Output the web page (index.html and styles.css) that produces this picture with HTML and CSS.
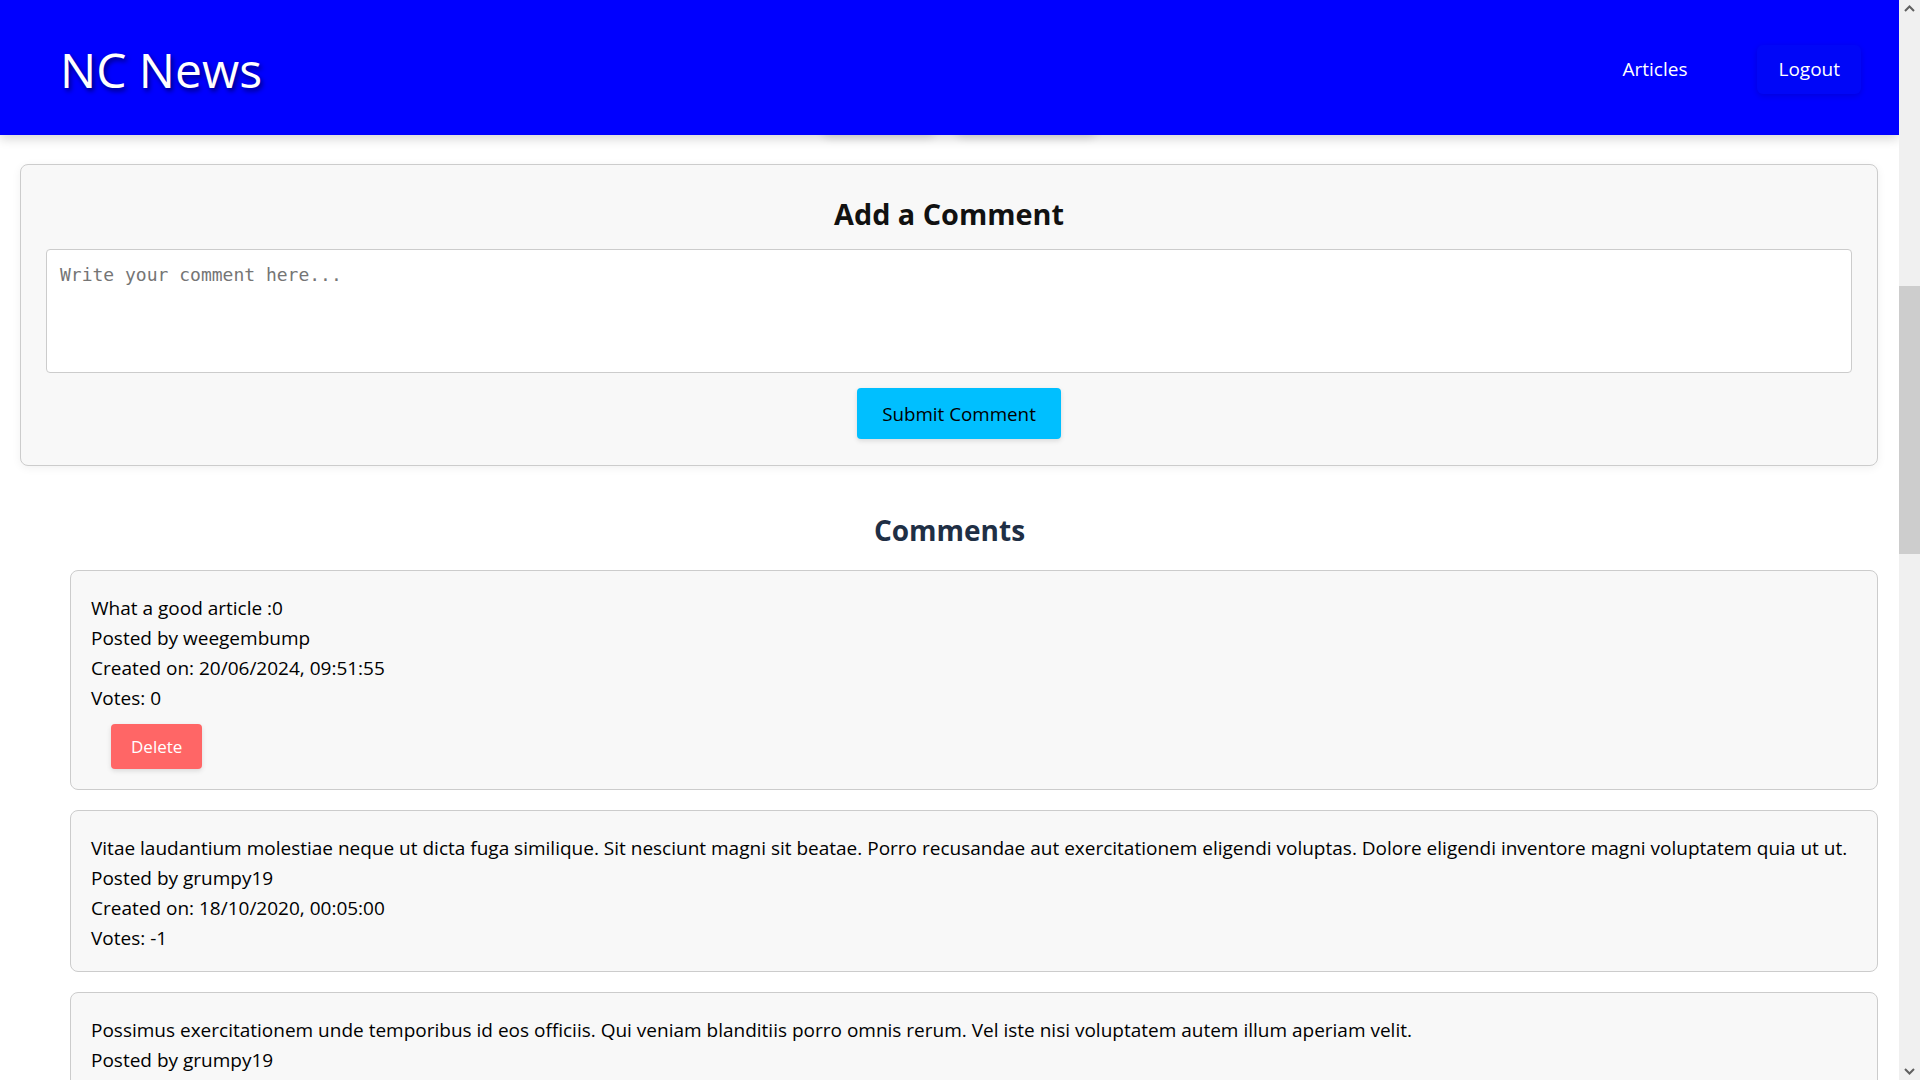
FILE: index.html
```html
<!DOCTYPE html>
<html lang="en">
<head>
<meta charset="utf-8">
<title>NC News</title>
<link rel="stylesheet" href="styles.css">
</head>
<body>
<div class="app">
  <div class="page">
    <header class="topbar">
      <h1 class="logo">NC News</h1>
      <nav class="nav">
        <a class="nav-link" href="#">Articles</a>
        <a class="nav-link nav-link--raised" href="#">Logout</a>
      </nav>
    </header>

    <div class="vote-row">
      <button class="vote-btn vote-btn--up" type="button">Upvote</button>
      <button class="vote-btn vote-btn--down" type="button">Downvote</button>
    </div>

    <section class="comment-form">
      <h2 class="comment-form__title">Add a Comment</h2>
      <textarea class="comment-form__input" placeholder="Write your comment here..."></textarea>
      <div class="comment-form__actions">
        <button class="submit-btn" type="button">Submit Comment</button>
      </div>
    </section>

    <section class="comments">
      <h2 class="comments__title">Comments</h2>
      <ul class="comments__list">
        <li class="comment-card">
          <p class="comment-card__line">What a good article :0</p>
          <p class="comment-card__line">Posted by weegembump</p>
          <p class="comment-card__line">Created on: 20/06/2024, 09:51:55</p>
          <p class="comment-card__line">Votes: 0</p>
          <button class="delete-btn" type="button">Delete</button>
        </li>
        <li class="comment-card">
          <p class="comment-card__line">Vitae laudantium molestiae neque ut dicta fuga similique. Sit nesciunt magni sit beatae. Porro recusandae aut exercitationem eligendi voluptas. Dolore eligendi inventore magni voluptatem quia ut ut.</p>
          <p class="comment-card__line">Posted by grumpy19</p>
          <p class="comment-card__line">Created on: 18/10/2020, 00:05:00</p>
          <p class="comment-card__line">Votes: -1</p>
        </li>
        <li class="comment-card">
          <p class="comment-card__line">Possimus exercitationem unde temporibus id eos officiis. Qui veniam blanditiis porro omnis rerum. Vel iste nisi voluptatem autem illum aperiam velit.</p>
          <p class="comment-card__line">Posted by grumpy19</p>
          <p class="comment-card__line">Created on: 18/10/2020, 00:05:00</p>
          <p class="comment-card__line">Votes: 0</p>
        </li>
      </ul>
    </section>
  </div>

  <div class="scrollbar" aria-hidden="true">
    <div class="scrollbar__arrow scrollbar__arrow--up">
      <svg width="11" height="7" viewBox="0 0 11 7"><polyline points="1,6 5.5,1.5 10,6" fill="none" stroke="#606060" stroke-width="2"/></svg>
    </div>
    <div class="scrollbar__track">
      <div class="scrollbar__thumb"></div>
    </div>
    <div class="scrollbar__arrow scrollbar__arrow--down">
      <svg width="11" height="7" viewBox="0 0 11 7"><polyline points="1,1 5.5,5.5 10,1" fill="none" stroke="#606060" stroke-width="2"/></svg>
    </div>
  </div>
</div>
</body>
</html>
```

FILE: styles.css
```css
* {
  box-sizing: border-box;
}

html, body {
  margin: 0;
  padding: 0;
  height: 1080px;
  overflow: hidden;
  background: #ffffff;
}

body {
  font-family: "Open Sans", "Noto Sans", "Liberation Sans", sans-serif;
  color: #000000;
}

.app {
  display: flex;
  height: 1080px;
  overflow: hidden;
}

.page {
  flex: 1;
  min-width: 0;
  overflow: hidden;
}

/* ---------- header ---------- */
.topbar {
  position: relative;
  z-index: 2;
  height: 135px;
  background: #0000ff;
  display: flex;
  align-items: center;
  justify-content: space-between;
  padding: 0 38px 0 60px;
  box-shadow: 0 4px 10px rgba(0, 0, 0, 0.16);
}

.logo {
  margin: 0;
  font-size: 48px;
  font-weight: 400;
  color: #ffffff;
  line-height: 1;
  text-shadow: 2px 3px 5px rgba(0, 0, 0, 0.55);
  padding-top: 4px;
}

.nav {
  display: flex;
  align-items: center;
  gap: 49px;
  padding-top: 3px;
}

.nav-link {
  display: block;
  color: #ffffff;
  text-decoration: none;
  font-size: 19px;
  line-height: 27px;
  padding: 11px 21px;
  border-radius: 6px;
}

.nav-link--raised {
  background: #0006f8;
  box-shadow: 0 2px 6px rgba(0, 0, 0, 0.14);
}

/* ---------- hidden vote row (scrolled under header) ---------- */
.vote-row {
  position: relative;
  z-index: 1;
  display: flex;
  justify-content: center;
  gap: 21px;
  margin-top: -44px;
  padding-left: 19px;
  height: 48px;
}

.vote-btn {
  height: 44px;
  border: none;
  border-radius: 8px;
  background: #eeeeee;
  box-shadow: 0 3px 8px rgba(0, 0, 0, 0.12);
  color: transparent;
  font-size: 16px;
}

.vote-btn--up {
  width: 113px;
}

.vote-btn--down {
  width: 140px;
}

/* ---------- comment form ---------- */
.comment-form {
  margin: 25px 21px 0 20px;
  background: #f8f8f8;
  border: 1px solid #cccccc;
  border-radius: 8px;
  box-shadow: 0 2px 10px rgba(0, 0, 0, 0.06);
  padding: 0 25px 26px;
}

.comment-form__title {
  margin: 31px 0 17px;
  text-align: center;
  font-size: 28.8px;
  font-weight: 700;
  line-height: 36px;
  color: #111111;
}

.comment-form__input {
  display: block;
  width: 100%;
  height: 124px;
  padding: 13px 13px 11px;
  border: 1px solid #cccccc;
  border-radius: 4px;
  background: #ffffff;
  font-family: "DejaVu Sans Mono", "Liberation Mono", monospace;
  font-size: 18px;
  line-height: 24px;
  resize: none;
}

.comment-form__input::placeholder {
  color: #757575;
}

.comment-form__actions {
  display: flex;
  justify-content: center;
  margin-top: 15px;
}

.submit-btn {
  height: 51px;
  margin-left: 20px;
  padding: 0 25px;
  border: none;
  border-radius: 4px;
  background: #00bfff;
  color: #000000;
  font-family: inherit;
  font-size: 18.8px;
  box-shadow: 0 2px 5px rgba(0, 0, 0, 0.12);
}

/* ---------- comments ---------- */
.comments__title {
  margin: 46px 0 22px;
  text-align: center;
  font-size: 28px;
  font-weight: 700;
  line-height: 36px;
  color: #1f2f45;
}

.comments__list {
  list-style: none;
  margin: 0 21px 0 70px;
  padding: 0;
  display: flex;
  flex-direction: column;
  gap: 20px;
}

.comment-card {
  background: #f8f8f8;
  border: 1px solid #cccccc;
  border-radius: 8px;
  padding: 22px 20px 18px 20px;
}

.comment-card__line {
  margin: 0;
  font-size: 19px;
  line-height: 30px;
  color: #000000;
}

.delete-btn {
  display: block;
  margin: 11px 0 2px 20px;
  height: 45px;
  padding: 0 20px;
  border: none;
  border-radius: 4px;
  background: #ff6666;
  color: #ffffff;
  font-family: inherit;
  font-size: 17px;
  box-shadow: 0 2px 5px rgba(0, 0, 0, 0.12);
}

/* ---------- scrollbar ---------- */
.scrollbar {
  width: 21px;
  flex: none;
  background: #f0f0f0;
  display: flex;
  flex-direction: column;
}

.scrollbar__arrow {
  height: 21px;
  display: flex;
  align-items: center;
  justify-content: center;
}

.scrollbar__arrow--up {
  align-items: flex-start;
  padding-top: 5px;
}

.scrollbar__arrow--down {
  align-items: flex-end;
  padding-bottom: 5px;
}

.scrollbar__track {
  flex: 1;
  padding-top: 265px;
}

.scrollbar__thumb {
  height: 268px;
  background: #cdcdcd;
}
```
